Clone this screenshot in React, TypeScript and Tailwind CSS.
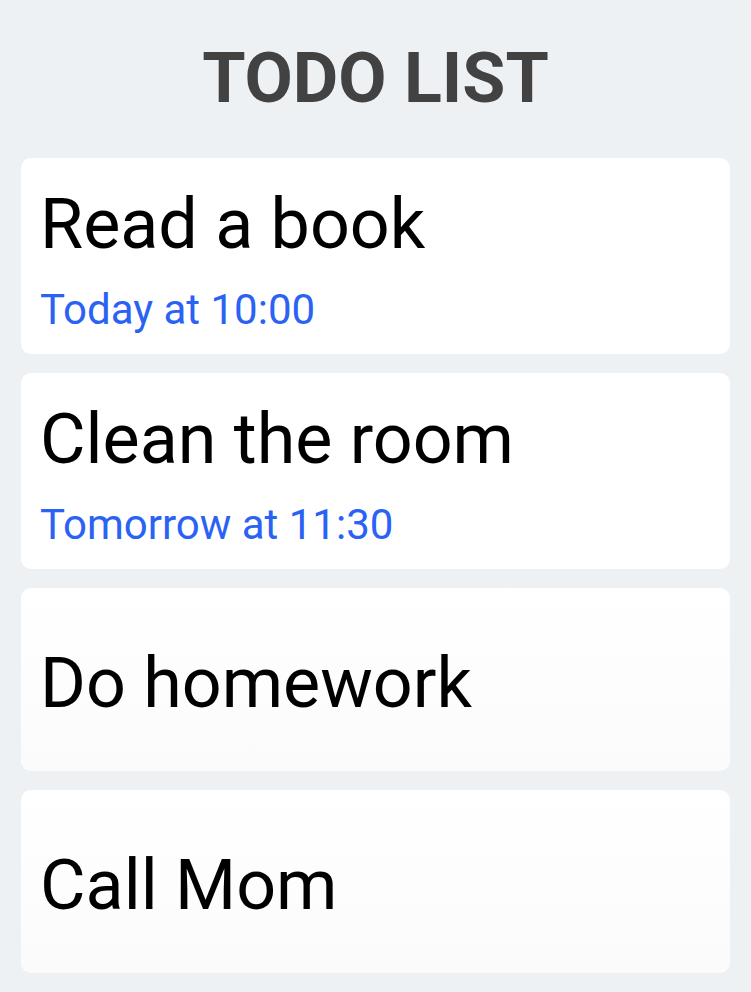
const todos = [
  { title: "Read a book", time: "Today at 10:00" },
  { title: "Clean the room", time: "Tomorrow at 11:30" },
  { title: "Do homework" },
  { title: "Call Mom" },
];

export default function App() {
  return (
    <div
      className="min-h-[992px] w-full bg-[#eef1f4] px-[21px] pt-[43px] pb-[21px]"
      style={{ fontFamily: "Roboto, 'Liberation Sans', sans-serif" }}
    >
      <h1 className="text-center text-[70px] font-bold leading-none text-[#424242]">
        TODO LIST
      </h1>
      <div className="mt-[45px] flex flex-col gap-[19px]">
        {todos.map((todo) =>
          todo.time ? (
            <div
              key={todo.title}
              className="rounded-[10px] bg-white px-[19px] pt-[31px] pb-[23px]"
            >
              <div className="text-[70px] leading-none text-black">{todo.title}</div>
              <div className="mt-[30px] text-[42px] leading-none text-[#2a62f4]">
                {todo.time}
              </div>
            </div>
          ) : (
            <div
              key={todo.title}
              className="rounded-[10px] bg-gradient-to-b from-white to-[#fbfbfb] px-[19px] pt-[60px] pb-[53px]"
            >
              <div className="text-[70px] leading-none text-black">{todo.title}</div>
            </div>
          )
        )}
      </div>
    </div>
  );
}
